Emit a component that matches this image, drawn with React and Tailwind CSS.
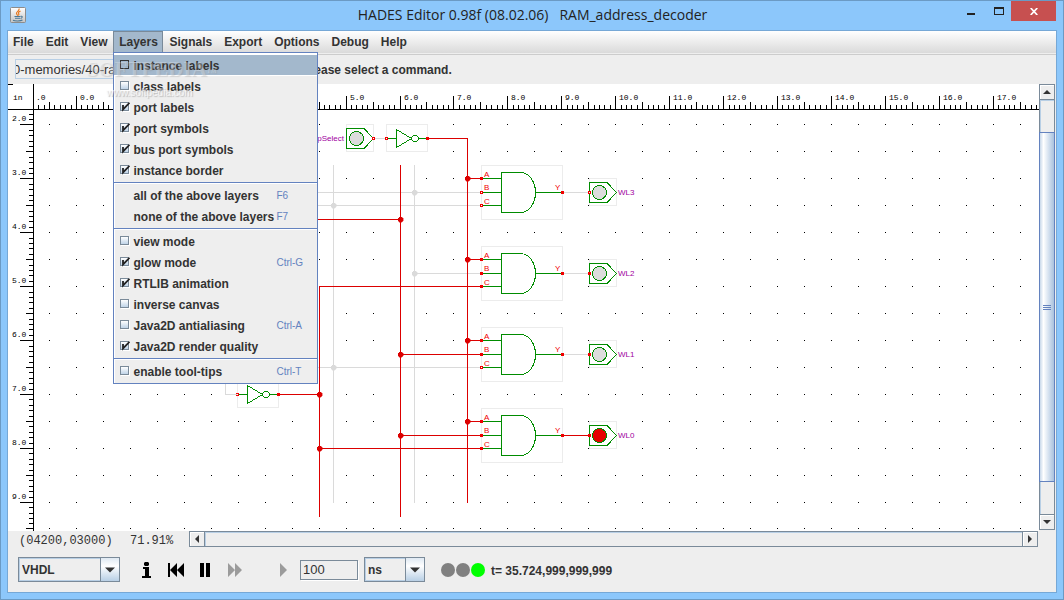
import React from 'react';

const STEP = 53.93;
const rulerX = (n) => Math.floor(76.45 + n * STEP);
const rulerY = (n) => Math.floor(17.04 + n * STEP);
const range = (from, to) => Array.from({ length: to - from + 1 }, (_, i) => from + i);

const RED = '#dc0000';
const GRAY = '#dadada';
const GREEN = '#008c00';
const MONO = '"Liberation Mono", monospace';
const SANS = '"Liberation Sans", sans-serif';

function tickLength(tenth) {
  if (tenth % 10 === 0) return 13;
  return tenth % 5 === 0 ? 7 : 4;
}

function Rulers() {
  const columns = range(-9, 400).filter((t) => rulerX(t / 10) > 33);
  const rows = range(18, 95);
  return (
    <g>
      <rect x="8" y="84" width="5" height="1" />
      <rect x="8" y="109" width="3000" height="1" />
      <rect x="33" y="84" width="1" height="447" />
      {columns.map((t) => (
        <rect key={t} x={rulerX(t / 10)} y={109 - tickLength(t)} width="1" height={tickLength(t)} />
      ))}
      {rows.map((t) => (
        <rect key={t} x={33 - tickLength(t)} y={Math.min(rulerY(t / 10), 528)} width={tickLength(t)} height="1" />
      ))}
      <g fontFamily={MONO} fontSize="8" fontWeight="normal">
        <text x="13" y="100">in</text>
        <text x="36" y="100">.0</text>
        {range(0, 17).map((n) => (
          <text key={n} x={rulerX(n) + 4} y="100">{n}.0</text>
        ))}
        {range(2, 9).map((n) => (
          <text key={n} x="12" y={rulerY(n) - 3}>{n}.0</text>
        ))}
      </g>
    </g>
  );
}

function GridDots() {
  return (
    <g>
      {range(4, 19).map((row) =>
        range(-1, 80).map((col) => (
          <rect key={row + ':' + col} x={rulerX(col / 2)} y={Math.min(rulerY(row / 2), 528)} width="1" height="1" />
        ))
      )}
    </g>
  );
}

function Wire({ d, color = RED }) {
  return <path d={d} fill="none" stroke={color} strokeWidth="1" />;
}

function Port({ x, y, filled }) {
  return <rect x={x - 0.5} y={y - 0.5} width="2" height="2" stroke="#f00000" fill={filled ? '#f00000' : '#ffffff'} />;
}

function Node({ x, y, color = RED }) {
  return <path d={`M${x - 1} ${y - 2}h3v1h1v3h-1v1h-3v-1h-1v-3h1z`} fill={color} stroke={color} strokeWidth=".4" />;
}

function Border({ x, y, w, h }) {
  return <rect x={x + 0.5} y={y + 0.5} width={w} height={h} fill="#ffffff" stroke="#ececec" />;
}

function Pad({ x, y, fill, name, portX, filled }) {
  return (
    <g>
      <Border x={x} y={y - 14} w={27} h={27} />
      <path d={`M${x + 0.5} ${y - 9.5}h17.5l9.5 10l-9.5 10h-17.5z`} fill="none" stroke={GREEN} />
      <circle cx={x + 10.5} cy={y + 0.5} r="7" fill={fill} stroke={GREEN} />
      <Port x={portX} y={y} filled={filled} />
      {name && (
        <text x={x + 29} y={y + 3} fill="#a000a0" fontFamily={SANS} fontSize="8">{name}</text>
      )}
    </g>
  );
}

function Inverter({ x, y }) {
  return (
    <g>
      <Border x={x} y={y - 14} w={41} h={27} />
      <path
        d={`M${x + 1} ${y + 0.5}h9M${x + 10.5} ${y - 8.5}v18l15-9zM${x + 33} ${y + 0.5}h8`}
        fill="none"
        stroke={GREEN}
      />
      <circle cx={x + 29} cy={y + 0.5} r="3.2" fill="none" stroke={GREEN} />
      <Port x={x} y={y} />
      <Port x={x + 41} y={y} filled />
    </g>
  );
}

function AndGate({ y, a, b, c, out }) {
  return (
    <g>
      <Border x={481} y={y - 27} w={81} h={54} />
      <path
        d={`M483 ${y - 13.5}h18M483 ${y + 0.5}h18M483 ${y + 13.5}h18M501.5 ${y - 19.5}h19a15 20 0 0 1 15 20a15 20 0 0 1 -15 20h-19zM536 ${y + 0.5}h25`}
        fill="none"
        stroke={GREEN}
      />
      <g fill="#f00000" fontFamily={SANS} fontSize="8">
        <text x="484" y={y - 15}>A</text>
        <text x="484" y={y - 2}>B</text>
        <text x="484" y={y + 12}>C</text>
        <text x="555" y={y - 2}>Y</text>
      </g>
      <Port x={481} y={y - 14} filled={a} />
      <Port x={481} y={y} filled={b} />
      <Port x={481} y={y + 13} filled={c} />
      <Port x={562} y={y} filled={out} />
    </g>
  );
}

function Schematic() {
  return (
    <svg className="block h-full w-full bg-white font-normal" shapeRendering="crispEdges" role="img" aria-label="RAM address decoder schematic">
      <g transform="translate(-8 -84)">
        <Rulers />
        <GridDots />
        <Pad x={346} y={138} fill="#dcdcdc" portX={373} />
        <text x="344" y="141" textAnchor="end" fill="#a000a0" fontFamily={SANS} fontSize="8">ChipSelect</text>
        <Inverter x={386} y={138} />
        <Inverter x={237} y={394} />
        <AndGate y={192} a out />
        <AndGate y={273} a b c out />
        <AndGate y={354} a b out />
        <AndGate y={435} a b c out />
        <Pad x={589} y={192} fill="#dcdcdc" name="WL3" portX={589} />
        <Pad x={589} y={273} fill="#dcdcdc" name="WL2" portX={589} filled />
        <Pad x={589} y={354} fill="#dcdcdc" name="WL1" portX={589} filled />
        <Pad x={589} y={435} fill="#e60000" name="WL0" portX={589} filled />

        <Wire color={GRAY} d="M375 138.5H385M333.5 165V503M414.5 165V503M114 192.5H480M114 205.5H480M414 273.5H480M114 367.5H480" />
        <Wire color={GRAY} d="M564 192.5H588M564 273.5H588M564 354.5H588M225.5 376V394.5H237" />
        <Wire d="M429 138.5H467.5V503M400.5 165V517M319.5 517V286.5H480M114 219.5H400" />
        <Wire d="M467 178.5H480M467 259.5H480M467 340.5H480M467 421.5H480" />
        <Wire d="M400 354.5H480M400 435.5H480M319 448.5H480M280 394.5H319M564 435.5H588" />

        <Node x={414} y={192} color={GRAY} />
        <Node x={333} y={205} color={GRAY} />
        <Node x={414} y={273} color={GRAY} />
        <Node x={333} y={367} color={GRAY} />
        <Node x={467} y={178} />
        <Node x={467} y={259} />
        <Node x={467} y={340} />
        <Node x={467} y={421} />
        <Node x={400} y={219} />
        <Node x={400} y={354} />
        <Node x={400} y={435} />
        <Node x={319} y={394} />
        <Node x={319} y={448} />
      </g>
    </svg>
  );
}

function JavaIcon() {
  return (
    <svg className="size-4" viewBox="0 0 16 16" aria-hidden="true">
      <defs>
        <linearGradient id="tile" x1="0" y1="0" x2="0" y2="1">
          <stop offset="0" stopColor="#ffffff" />
          <stop offset="1" stopColor="#c4c4c4" />
        </linearGradient>
      </defs>
      <rect x=".5" y=".5" width="15" height="15" rx="1" fill="url(#tile)" stroke="#8c8c8c" />
      <path d="M9 1.5C10 4 6 4.600 6.500 6.500C6.700 7.300 7.500 8 7.800 8.800M10.500 4C8.500 5 8 5.500 8.700 6.500C9.200 7.400 8.800 8 8.400 8.500" fill="none" stroke="#e8781e" strokeWidth="1.200" />
      <path d="M4.500 9.500H10.500M5 11.200H10M10.800 9.300C13 8.800 12.500 11 10.500 11.500M3 13.200C5 14.200 10.500 14.200 12.500 13" fill="none" stroke="#4a7897" strokeWidth="1.100" />
    </svg>
  );
}

function TitleBar() {
  return (
    <header className="flex h-[29px] shrink-0 items-start pl-[9px] pr-[7px]">
      <div className="flex w-22 pt-1.5">
        <JavaIcon />
      </div>
      <h1 className="flex-1 whitespace-pre pt-0.5 text-center font-['Open_Sans',sans-serif] text-[14px] font-normal leading-6 text-[#222]">
        {'HADES Editor 0.98f (08.02.06)   RAM_address_decoder'}
      </h1>
      <div className="flex">
        <button aria-label="Minimize" className="flex h-[19px] w-[22px] justify-start pt-3">
          <span className="h-0.5 w-2 bg-[#222]" />
        </button>
        <button aria-label="Maximize" className="flex h-[19px] w-[22px] justify-center pr-0.5 pt-1.5">
          <span className="h-2 w-2.5 border border-t-2 border-[#222]" />
        </button>
        <button aria-label="Close" className="flex h-5 w-[45px] items-center justify-center bg-[#c75050]">
          <svg className="h-[7px] w-2" viewBox="0 0 8 7" aria-hidden="true">
            <path d="M.7 0L7.300 7M7.300 0L.7 7" stroke="#ffffff" strokeWidth="1.700" />
          </svg>
        </button>
      </div>
    </header>
  );
}

const layerGroups = [
  [
    { label: 'instance labels', checked: false, active: true },
    { label: 'class labels', checked: false },
    { label: 'port labels', checked: true },
    { label: 'port symbols', checked: true },
    { label: 'bus port symbols', checked: true },
    { label: 'instance border', checked: true },
  ],
  [
    { label: 'all of the above layers', keys: 'F6' },
    { label: 'none of the above layers', keys: 'F7' },
  ],
  [
    { label: 'view mode', checked: false },
    { label: 'glow mode', checked: true, keys: 'Ctrl-G' },
    { label: 'RTLIB animation', checked: true },
    { label: 'inverse canvas', checked: false },
    { label: 'Java2D antialiasing', checked: false, keys: 'Ctrl-A' },
    { label: 'Java2D render quality', checked: true },
  ],
  [{ label: 'enable tool-tips', checked: false, keys: 'Ctrl-T' }],
];

function LayerItem({ label, checked, keys, active }) {
  const shortcut = <span className="w-[37px] text-[10px] font-normal text-[#6382bf]">{keys}</span>;
  if (checked === undefined) {
    return (
      <button className="flex h-[21px] w-full items-center pl-[19px] pr-1 text-left">
        <span className="w-0 flex-1 whitespace-nowrap">{label}</span>
        {shortcut}
      </button>
    );
  }
  return (
    <label className={active ? 'flex h-[21px] items-center border-b border-white bg-[#a3b8cc] pl-1.5 pr-1 pt-px' : 'flex h-[21px] items-center pl-1.5 pr-1'}>
      <span className="mb-0.5 mr-[3px] grid size-2.5 shrink-0">
        <input
          type="checkbox"
          defaultChecked={checked}
          className={
            active
              ? 'peer col-start-1 row-start-1 size-[9px] appearance-none border border-[#333]'
              : 'peer col-start-1 row-start-1 size-[9px] appearance-none border border-[#7a8a99] bg-linear-to-b from-white to-[#c0d4e8] shadow-[1px_1px_0_#fff]'
          }
        />
        <svg className="pointer-events-none invisible col-start-1 row-start-1 size-2.5 peer-checked:visible" viewBox="0 0 10 10" aria-hidden="true">
          <path d="M3 3V7.500L9.500 .8" fill="none" stroke="#222" strokeWidth="1.800" />
        </svg>
      </span>
      <span className="flex-1 whitespace-nowrap">{label}</span>
      {shortcut}
    </label>
  );
}

function LayersMenu() {
  return (
    <div className="absolute left-0 top-[21px] z-10 w-[205px] border border-[#6382bf] bg-[#eee] pb-px pt-0.5 shadow-[inset_1px_2px_0_#fff]">
      {layerGroups.map((group, i) => (
        <div key={i}>
          {i > 0 && <hr className="my-px h-0.5 border-t border-b border-t-[#6382bf] border-b-white" />}
          {group.map((item) => (
            <LayerItem key={item.label} {...item} />
          ))}
        </div>
      ))}
      <div className="pointer-events-none absolute -left-7 top-1 w-40 select-none text-white/25">
        <p className="font-['Liberation_Serif',serif] text-[21px] leading-6 [text-shadow:1px_1px_1px_#8884]">
          SOFTPEDIA<sup className="text-[6px]">TM</sup>
        </p>
        <p className="pl-5 text-[10px] font-normal leading-6 text-white/70 [text-shadow:1px_1px_1px_#8888]">www.softpedia.com</p>
      </div>
    </div>
  );
}

function MenuBar() {
  return (
    <nav className="flex h-[22px] shrink-0 bg-linear-to-b from-white to-[#dadada] shadow-[0_1px_0_#eee,0_2px_0_#ccc]">
      {['File', 'Edit', 'View', 'Layers', 'Signals', 'Export', 'Options', 'Debug', 'Help'].map((name) => {
        if (name === 'Layers') {
          return (
            <div key={name} className="relative">
              <button className="h-[21px] w-[50px] border-l border-t border-r border-[#7a8a99] bg-[#a3b8cc] text-center">{name}</button>
              <LayersMenu />
            </div>
          );
        }
        return (
          <button key={name} className={name === 'File' ? 'h-[21px] pl-[5px] pr-1.5' : 'h-[21px] px-1.5'}>{name}</button>
        );
      })}
    </nav>
  );
}

function Arrow({ dir, className = 'size-2' }) {
  const paths = { up: 'M4 2L8 6H0z', down: 'M4 6L8 2H0z', left: 'M2 4L6 0V8z', right: 'M6 4L2 0V8z' };
  return (
    <svg className={className} viewBox="0 0 8 8" aria-hidden="true">
      <path d={paths[dir]} fill="#333" />
    </svg>
  );
}

function VerticalScroll() {
  return (
    <div className="mb-px mr-px flex w-4 shrink-0 flex-col border border-[#7a8a99] bg-[#eee]">
      <button aria-label="Scroll up" className="flex h-[15px] items-center justify-center border-b border-[#7a8a99] shadow-[inset_1px_1px_0_#fff]">
        <Arrow dir="up" />
      </button>
      <div className="flex min-h-0 flex-1 flex-col shadow-[inset_1px_1px_0_#b8cfe5]">
        <div className="h-8 shrink-0" />
        <div className="-mx-px flex min-h-0 flex-[350] flex-col items-center justify-center gap-px border border-[#6382bf] bg-linear-to-r from-[#c8d8ea] via-white via-25% to-[#a9c2de]">
          {[0, 1, 2].map((i) => (
            <span key={i} className="h-px w-2 bg-[#6382bf]" />
          ))}
        </div>
        <div className="flex-[32]" />
      </div>
      <button aria-label="Scroll down" className="flex h-[15px] items-center justify-center border-t border-[#7a8a99] shadow-[inset_1px_1px_0_#fff]">
        <Arrow dir="down" />
      </button>
    </div>
  );
}

function HorizontalScroll() {
  return (
    <div className="flex h-4 flex-1 border border-[#7a8a99]">
      <button aria-label="Scroll left" className="flex w-[15px] items-center justify-center border-r border-[#7a8a99] shadow-[inset_1px_1px_0_#fff]">
        <Arrow dir="left" />
      </button>
      <div className="flex-1 shadow-[inset_1px_1px_0_#b8cfe5]" />
      <button aria-label="Scroll right" className="flex w-[15px] items-center justify-center border-l border-[#7a8a99] shadow-[inset_1px_1px_0_#fff]">
        <Arrow dir="right" />
      </button>
    </div>
  );
}

function Combo({ label, value, size }) {
  return (
    <div className={'grid h-[25px] shrink-0 border border-[#7a8a99] ' + size}>
      <select
        aria-label={label}
        defaultValue={value}
        className="col-start-1 row-start-1 appearance-none border border-[#b8cfe5] bg-[#eee] pl-0.5 font-bold"
      >
        <option>{value}</option>
      </select>
      <span className="pointer-events-none col-start-1 row-start-1 flex w-[19px] items-center justify-center justify-self-end border-l border-[#7a8a99] bg-linear-to-b from-[#dfe9f3] via-white via-35% to-[#b8cfe5]">
        <Arrow dir="down" className="size-2.5" />
      </span>
    </div>
  );
}

function PlayerButton({ label, size, children }) {
  return (
    <button aria-label={label} className={'flex h-4 shrink-0 items-center ' + size}>
      {children}
    </button>
  );
}

function ControlPanel() {
  return (
    <footer className="flex h-11 shrink-0 items-center pb-px pl-2.5">
      <Combo label="Language" value="VHDL" size="w-[102px]" />
      <div className="ml-[22px] flex shrink-0 items-center">
        <PlayerButton label="Info" size="w-[26px]">
          <svg width="10" height="16" viewBox="0 0 10 16" aria-hidden="true">
            <path d="M3 0H6L7 1V3L6 4H3L2 3V1zM1 5H7V14H9V16H0V14H3V7H1z" />
          </svg>
        </PlayerButton>
        <PlayerButton label="Rewind" size="w-8">
          <svg width="16" height="14" viewBox="0 0 16 14" aria-hidden="true">
            <path d="M0 0H2V14H0zM2 7L9 0V14zM9 7L16 0V14z" />
          </svg>
        </PlayerButton>
        <PlayerButton label="Pause" size="w-7">
          <svg width="11" height="14" viewBox="0 0 11 14" aria-hidden="true">
            <path d="M0 0H4V14H0zM6 0H10V14H6z" />
          </svg>
        </PlayerButton>
        <PlayerButton label="Fast forward" size="w-[52px]">
          <svg width="15" height="14" viewBox="0 0 15 14" aria-hidden="true">
            <path d="M0 0L7 7L0 14zM7 0L14 7L7 14z" fill="#9b9b9b" />
          </svg>
        </PlayerButton>
        <PlayerButton label="Step" size="w-5">
          <svg width="8" height="14" viewBox="0 0 8 14" aria-hidden="true">
            <path d="M0 0L7 7L0 14z" fill="#9b9b9b" />
          </svg>
        </PlayerButton>
      </div>
      <input
        aria-label="Step time"
        defaultValue="100"
        className="h-5 w-[58px] border border-[#7a8a99] bg-[#eee] pl-0.5 text-[13px] font-normal shadow-[1px_1px_0_#fff]"
      />
      <div className="ml-1.5 flex">
        <Combo label="Time unit" value="ns" size="w-[61px]" />
      </div>
      <div className="ml-4 mr-1.5 flex gap-px">
        <span className="size-3.5 rounded-full bg-[#808080]" />
        <span className="size-3.5 rounded-full bg-[#808080]" />
        <span className="size-3.5 rounded-full bg-[#00ff00]" />
      </div>
      <output className="pt-0.5">t= 35.724,999,999,999</output>
    </footer>
  );
}

export default function App() {
  return (
    <div className="flex h-screen min-h-[600px] flex-col border border-[#6b9ac4] bg-[#8cc7fb] pb-1.5 font-['Liberation_Sans',sans-serif] text-[12px] font-bold text-[#333]">
      <TitleBar />
      <main className="mx-1.5 flex min-h-0 flex-1 flex-col border border-[#76a8d6] bg-[#eee]">
        <MenuBar />
        <div className="flex h-[31px] shrink-0 items-center pl-[7px] pt-px">
          <input
            aria-label="Design path"
            readOnly
            defaultValue="0-memories/40-ram/addressdecoder"
            className="h-5 w-60 border border-[#b8cfe5] bg-[#eee] text-[13px] font-normal indent-[-3px]"
          />
          <p className="pl-12 pt-0.5">Please select a command.</p>
        </div>
        <div className="flex min-h-0 flex-1">
          <div className="min-w-0 flex-1">
            <Schematic />
          </div>
          <VerticalScroll />
        </div>
        <div className="flex h-[17px] shrink-0 items-start pr-[18px] font-['Liberation_Mono',monospace] text-[12px] font-normal leading-5">
          <p className="w-[122px] shrink-0 pl-[11px]">(04200,03000)</p>
          <p className="w-[59px] shrink-0">71.91%</p>
          <HorizontalScroll />
        </div>
        <ControlPanel />
      </main>
    </div>
  );
}
